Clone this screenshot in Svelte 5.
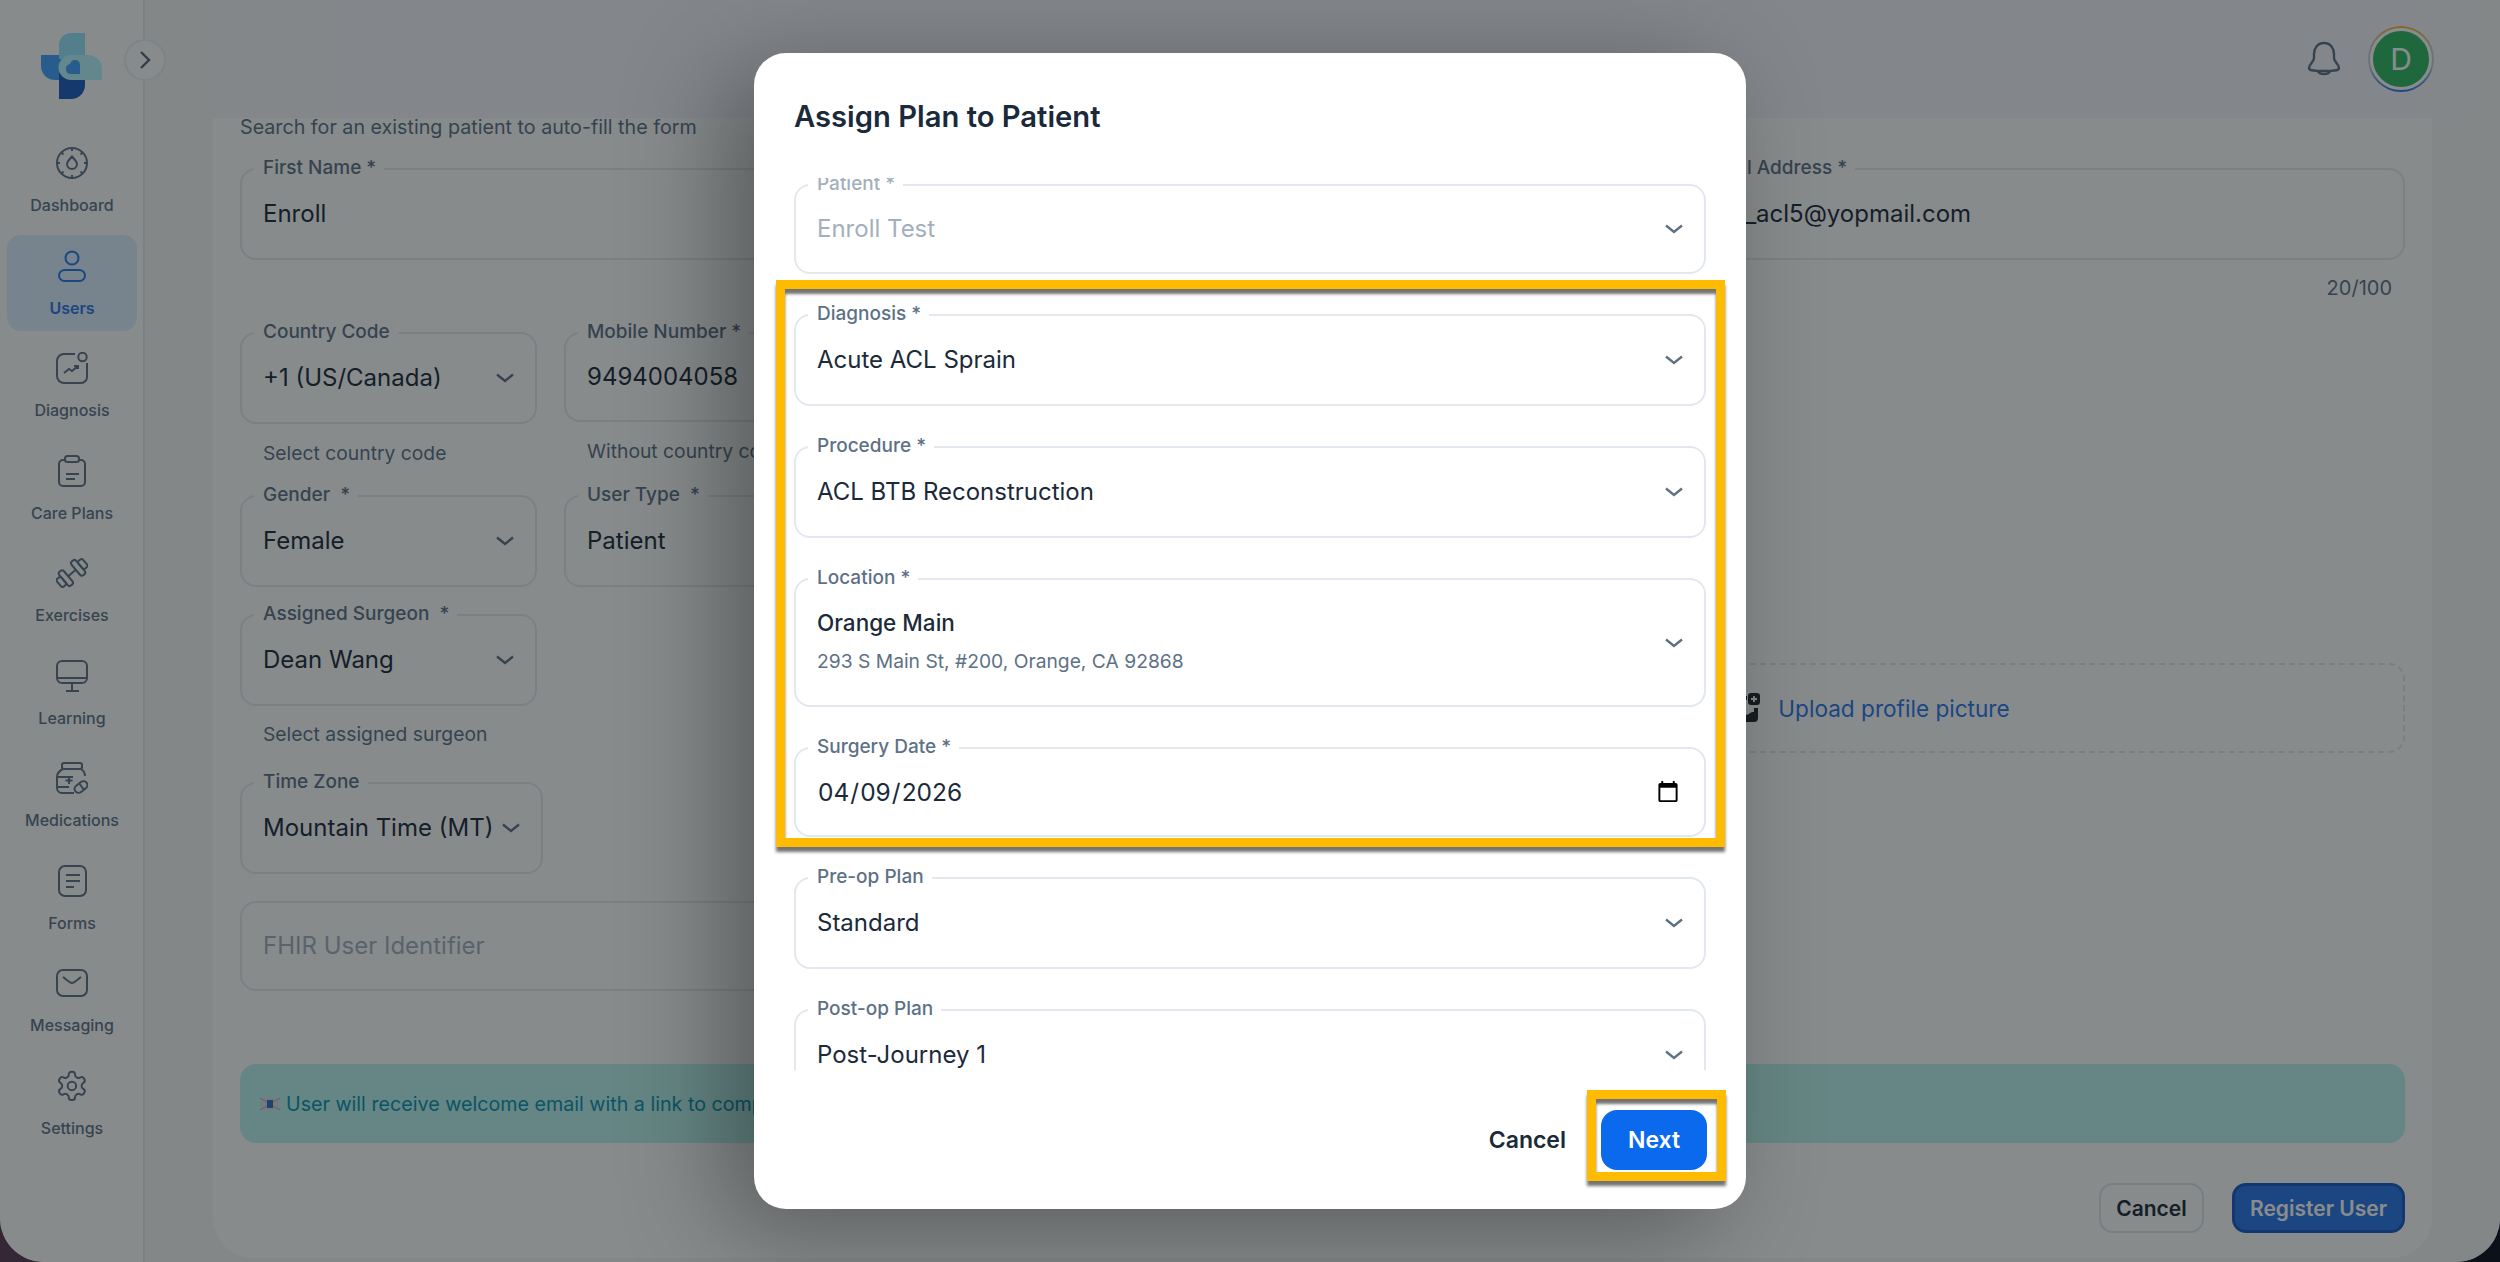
<script lang="ts">
  const nav = [
    { name: "Dashboard", icon: `<circle cx="16" cy="16" r="15"/><path d="M16 9.500c2.500 3 5 5 5 7.500a5 5 0 0 1-10 0c0-2.500 2.500-4.500 5-7.500z"/><path d="M16 1v3M16 28v3M1 16h3M28 16h3M5.500 5.500l2 2M24.500 7.500l2-2M5.500 26.500l2-2M24.500 24.500l2 2"/>` },
    { name: "Users", active: true, icon: `<circle cx="16" cy="8" r="6.500"/><rect x="3" y="20" width="26" height="11" rx="5.500"/>` },
    { name: "Diagnosis", icon: `<path d="M19 2H8a7 7 0 0 0-7 7v15a7 7 0 0 0 7 7h17a6 6 0 0 0 6-6V11"/><circle cx="26.500" cy="5" r="4.200"/><path d="M8 21l5-4 3 2 6-5M18 14h4v3"/>` },
    { name: "Care Plans", icon: `<path d="M9 5H7a4 4 0 0 0-4 4v18a4 4 0 0 0 4 4h18a4 4 0 0 0 4-4V9a4 4 0 0 0-4-4h-2"/><rect x="9" y="1" width="14" height="6" rx="2.500"/><path d="M10 19h13M10 24h9"/>` },
    { name: "Exercises", icon: `<g transform="rotate(-40 16 16)"><rect x="-1" y="11" width="6" height="10" rx="2"/><rect x="5" y="7" width="6" height="18" rx="2.500"/><rect x="21" y="7" width="6" height="18" rx="2.500"/><rect x="27" y="11" width="6" height="10" rx="2"/><path d="M11 16h10"/></g>` },
    { name: "Learning", icon: `<rect x="1" y="1" width="30" height="22" rx="5"/><path d="M1 18h30M16 23v7M10 31h13"/>` },
    { name: "Medications", icon: `<rect x="6" y="1" width="20" height="6" rx="2"/><path d="M25 7c3 2 4 4 4 7M7 7c-4 2-6 4-6 8v11a5 5 0 0 0 5 5h12"/><path d="M1 15h16M1 25h12M13 15v7M9.500 18.500h7"/><rect x="18" y="21" width="14" height="8" rx="4" transform="rotate(-38 25 25)"/><path d="M23 21l5 7"/>` },
    { name: "Forms", icon: `<rect x="3" y="1" width="27" height="30" rx="6"/><path d="M10 10h14M10 16h14M10 22h8"/>` },
    { name: "Messaging", icon: `<rect x="1" y="3" width="30" height="26" rx="6"/><path d="M7 10c5 4 7 6 9 6s4-2 9-6"/>` },
    { name: "Settings", icon: `<g transform="scale(1.42) translate(-.8 -.8)" stroke-width="1.400"><path d="M12.220 2h-.44a2 2 0 0 0-2 2v.18a2 2 0 0 1-1 1.730l-.43.25a2 2 0 0 1-2 0l-.15-.08a2 2 0 0 0-2.730.73l-.22.38a2 2 0 0 0 .73 2.730l.15.1a2 2 0 0 1 1 1.720v.51a2 2 0 0 1-1 1.740l-.15.09a2 2 0 0 0-.73 2.730l.22.38a2 2 0 0 0 2.730.73l.15-.08a2 2 0 0 1 2 0l.43.25a2 2 0 0 1 1 1.730V20a2 2 0 0 0 2 2h.44a2 2 0 0 0 2-2v-.18a2 2 0 0 1 1-1.730l.43-.25a2 2 0 0 1 2 0l.15.08a2 2 0 0 0 2.730-.73l.22-.39a2 2 0 0 0-.73-2.730l-.15-.08a2 2 0 0 1-1-1.740v-.5a2 2 0 0 1 1-1.740l.15-.09a2 2 0 0 0 .73-2.730l-.22-.38a2 2 0 0 0-2.730-.73l-.15.08a2 2 0 0 1-2 0l-.43-.25a2 2 0 0 1-1-1.730V4a2 2 0 0 0-2-2z"/><circle cx="12" cy="12" r="3"/></g>` },
  ];
</script>

{#snippet chevron()}
  <svg class="chevron" width="18" height="10" viewBox="0 0 18 10" fill="none" aria-hidden="true">
    <path d="M1 1.500l8 6.500 8-6.500" stroke="currentColor" stroke-width="2.400" />
  </svg>
{/snippet}

{#snippet field(label: string, value: string, select = false, cls = "")}
  <div class="field {cls}">
    <span class="label">{label}</span>
    <span class="value">{value}</span>
    {#if select}{@render chevron()}{/if}
  </div>
{/snippet}

<div class="window">
  <div class="app">
    <aside class="sidebar">
      <div class="brand">
        <svg width="62" height="66" viewBox="0 0 62 66" aria-hidden="true">
          <path d="M0 22h26v25H14A14 14 0 0 1 0 33z" fill="#42a2ff" />
          <path d="M18 40h26v12a14 14 0 0 1-14 14H18z" fill="#1c5cc0" />
          <path d="M18 12A12 12 0 0 1 30 0h14v26H18z" fill="#95e6ff" />
          <path d="M30 22h17a14 14 0 0 1 14 14v11H30a12.500 12.500 0 0 1 0-25z" fill="#b7f6ff" />
          <path d="M39 41H30a5 5 0 0 1-1-9.900c.5-2.500 2.500-4.100 5-4.100 3 0 5 2 5 5z" fill="#42a2ff" />
        </svg>
      </div>
      <button class="toggle" aria-label="Expand sidebar">
        <svg width="14" height="22" viewBox="0 0 14 22" fill="none"><path d="M3 3l8 8-8 8" stroke="currentColor" stroke-width="2.400" /></svg>
      </button>
      <nav class="nav">
        {#each nav as item}
          <div class="nav-item" class:active={item.active}>
            <svg width="32" height="32" viewBox="0 0 32 32" fill="none" stroke="currentColor" stroke-width="2" aria-hidden="true">{@html item.icon}</svg>
            <span>{item.name}</span>
          </div>
        {/each}
      </nav>
    </aside>

    <main class="main">
      <header class="topbar">
        <svg class="bell" width="34" height="36" viewBox="0 0 34 36" fill="none" stroke="currentColor" stroke-width="2.400" aria-hidden="true">
          <path d="M17 2C10 2 7 8 7 13v4c0 4-5 6-5 10 0 2 2 3 15 3s15-1 15-3c0-4-5-6-5-10v-4c0-5-3-11-10-11z" />
          <path d="M11 30c1 4 11 4 12 0" />
        </svg>
        <div class="avatar-ring"><div class="avatar">D</div></div>
      </header>

      <section class="card">
        <p class="search-hint">Search for an existing patient to auto-fill the form</p>

        <div class="name-row">
          {@render field("First Name *", "Enroll")}
          {@render field("Last Name *", "Test")}
          {@render field("Email Address *", "test_acl5@yopmail.com")}
        </div>
        <div class="counter">20/100</div>

        <div class="form-body">
          <div class="left">
            <div class="pair">
              <div class="col">
                {@render field("Country Code", "+1 (US/Canada)", true)}
                <p class="help">Select country code</p>
              </div>
              <div class="col">
                {@render field("Mobile Number *", "9494004058", false, "short")}
                <p class="help">Without country code</p>
              </div>
            </div>
            <div class="pair gender-row">
              <div class="col">{@render field("Gender  *", "Female", true)}</div>
              <div class="col">{@render field("User Type  *", "Patient", true)}</div>
            </div>
            <div class="pair surgeon-row">
              <div class="col">
                {@render field("Assigned Surgeon  *", "Dean Wang", true)}
                <p class="help tight">Select assigned surgeon</p>
              </div>
            </div>
            <div class="timezone">{@render field("Time Zone", "Mountain Time (MT)", true)}</div>
            <div class="fhir field short"><span class="value placeholder">FHIR User Identifier</span></div>
          </div>
          <div class="right">
            <div class="upload">
              <svg width="30" height="30" viewBox="0 0 30 30" aria-hidden="true">
                <path d="M2 3h15v4H6v16l6-5 5 4 5-3h2v-4h4v10a4 4 0 0 1-4 4H6a4 4 0 0 1-4-4z" fill="#20262c" />
                <rect x="18" y="0" width="12" height="12" rx="3" fill="#20262c" />
                <path d="M24 3v6M21 6h6" stroke="#fff" stroke-width="1.800" />
              </svg>
              <span>Upload profile picture</span>
            </div>
          </div>
        </div>

        <div class="banner">
          <svg width="20" height="12" viewBox="0 0 20 12" aria-hidden="true">
            <rect width="20" height="12" fill="#d8dce2" />
            <path d="M0 0l10 6 10-6M0 12l10-6 10 6" stroke="#a8aeb6" fill="none" />
            <rect x="7" y="2" width="6" height="8" fill="#2f6fd0" />
          </svg>
          <span>User will receive welcome email with a link to complete their registration and set up a password</span>
        </div>

        <div class="card-actions">
          <button class="btn-ghost">Cancel</button>
          <button class="btn-primary">Register User</button>
        </div>
      </section>
    </main>
  </div>

  <div class="overlay">
    <div class="modal" role="dialog" aria-label="Assign Plan to Patient">
      <h2 class="title">Assign Plan to Patient</h2>

      <div class="scroller">
        {@render field("Patient *", "Enroll Test", true, "disabled short")}
        {@render field("Diagnosis *", "Acute ACL Sprain", true)}
        {@render field("Procedure *", "ACL BTB Reconstruction", true)}
        <div class="field location">
          <span class="label">Location *</span>
          <div class="stack">
            <span class="value name">Orange Main</span>
            <span class="address">293 S Main St, #200, Orange, CA 92868</span>
          </div>
          {@render chevron()}
        </div>
        <div class="field short">
          <span class="label">Surgery Date *</span>
          <input class="date" type="date" value="2026-04-09" />
        </div>
        {@render field("Pre-op Plan", "Standard", true)}
        {@render field("Post-op Plan", "Post-Journey 1", true)}
      </div>

      <footer class="modal-actions">
        <button class="btn-text">Cancel</button>
        <button class="btn-next">Next</button>
      </footer>

      <!-- tutorial highlights -->
      <div class="mark mark-fields"></div>
      <div class="mark mark-next"></div>
    </div>
  </div>
</div>

<style>
  :global(body) {
    margin: 0;
    font-family: Inter, "Noto Sans", sans-serif;
  }

  .window {
    position: relative;
    width: 2500px;
    height: 1262px;
    overflow: hidden;
    background: linear-gradient(90deg, #5a3a55, #0a0e1c);
  }

  .app {
    display: flex;
    height: 100%;
    background: #fff;
    border-radius: 0 0 44px 44px;
    overflow: hidden;
  }

  .sidebar {
    position: relative;
    flex: 0 0 145px;
    box-sizing: border-box;
    border-right: 2px solid #e2e8f0;
    background: #fbfdfe;
  }

  .brand {
    height: 132px;
    box-sizing: border-box;
    padding: 33px 0 0 41px;
  }

  .toggle {
    position: absolute;
    top: 39px;
    left: 124px;
    width: 42px;
    height: 42px;
    padding: 0;
    display: flex;
    align-items: center;
    justify-content: center;
    border: 2px solid #eaeef3;
    border-radius: 50%;
    background: #fbfdfe;
    color: #52657a;
  }

  .nav {
    display: flex;
    flex-direction: column;
    gap: 6.500px;
    padding: 0 6px 0 7px;
  }

  .nav-item {
    height: 96px;
    box-sizing: border-box;
    padding-top: 15px;
    display: flex;
    flex-direction: column;
    align-items: center;
    border-radius: 14px;
    color: #5e7288;
    font-size: 16px;
    font-weight: 500;
    line-height: 20px;
  }

  .nav-item span {
    margin-top: 16px;
  }

  .nav-item.active {
    background: #dceeff;
    color: #2a76e8;
    font-weight: 600;
  }

  .main {
    flex: 1;
    min-width: 0;
    display: flex;
    flex-direction: column;
    background: #f3f5f6;
  }

  .topbar {
    flex: 0 0 119px;
    display: flex;
    align-items: center;
    justify-content: flex-end;
    gap: 27px;
    padding: 0 66px 0 0;
    margin-top: -1px;
    background: linear-gradient(90deg, #f3f5f6 0, #f3f5f6 2%, #f3f5fb 9%, #f3f5fb 96%, #f3f5f6 99%);
    color: #5d7186;
  }

  .avatar-ring {
    width: 66px;
    height: 66px;
    box-sizing: border-box;
    padding: 2px;
    border-radius: 50%;
    background: linear-gradient(#f5b53f, #c8ccd0 35%, #c8ccd0 60%, #2a76e8);
  }

  .avatar {
    width: 100%;
    height: 100%;
    box-sizing: border-box;
    display: flex;
    align-items: center;
    justify-content: center;
    border: 3px solid #fff;
    border-radius: 50%;
    background: #2fb862;
    color: #fff;
    font-size: 30px;
  }

  .card {
    flex: 1;
    margin: 0 68px 4px;
    padding: 0 27px;
    background: #fcfdfe;
    border-radius: 0 0 40px 40px;
    color: #1b2a3a;
  }

  .search-hint {
    margin: 0;
    font-size: 19.700px;
    line-height: 18px;
    color: #5d7186;
  }

  .name-row {
    display: grid;
    grid-template-columns: 1fr 1fr 725px;
    gap: 27px;
    margin-top: 32px;
  }

  .counter {
    margin-top: 18px;
    padding-right: 13px;
    text-align: right;
    font-size: 20px;
    line-height: 20px;
    color: #5d7186;
  }

  .form-body {
    display: flex;
    gap: 25px;
    margin-top: 34px;
  }

  .left {
    flex: 0 0 1070px;
  }

  .right {
    flex: 1;
  }

  .pair {
    display: flex;
    gap: 27px;
  }

  .col {
    flex: 0 0 297px;
  }

  .help {
    margin: 19px 0 0;
    padding-left: 23px;
    font-size: 19.300px;
    line-height: 20px;
    white-space: nowrap;
    color: #5d7186;
  }

  .help.tight {
    margin-top: 18px;
  }

  .gender-row {
    margin-top: 32px;
  }

  .surgeon-row {
    margin-top: 27px;
  }

  .timezone {
    width: 303px;
    margin-top: 38px;
  }

  .fhir {
    margin-top: 27px;
  }

  .upload {
    display: flex;
    align-items: center;
    justify-content: center;
    gap: 18px;
    height: 90px;
    margin-top: 331px;
    box-sizing: border-box;
    border: 2px dashed #dde3ea;
    border-radius: 16px;
    color: #2a76e8;
    font-size: 22.600px;
  }

  .banner {
    display: flex;
    align-items: center;
    gap: 6px;
    height: 79px;
    margin-top: 73px;
    padding-left: 20px;
    border-radius: 16px;
    background: #b8f3ee;
    color: #0891b2;
    font-size: 19.700px;
    padding-top: 1px;
    box-sizing: border-box;
  }

  .card-actions {
    display: flex;
    justify-content: flex-end;
    gap: 28px;
    margin-top: 40px;
  }

  .card-actions button {
    height: 50px;
    padding: 0;
    border-radius: 14px;
    white-space: nowrap;
    font: 600 21px Inter, sans-serif;
  }

  .btn-ghost {
    width: 105px;
    border: 2px solid #dde3ea;
    background: transparent;
    color: #1b2a3a;
  }

  .btn-primary {
    width: 173px;
    border: 3px solid #1858c8;
    background: #2a76e8;
    color: #fff;
  }

  /* outlined field, label sits on the top border */
  .field {
    position: relative;
    height: 92px;
    box-sizing: border-box;
    display: flex;
    align-items: center;
    justify-content: space-between;
    padding: 0 21px;
    border: 2px solid #e3e8ee;
    border-radius: 16px;
    background: inherit;
  }

  .field.short {
    height: 90px;
  }

  .field.location {
    height: 129px;
  }

  .label {
    position: absolute;
    top: -12px;
    left: 12px;
    padding: 0 8px 0 9px;
    background: #fff;
    font-size: 19px;
    font-weight: 500;
    line-height: 20px;
    white-space: pre;
    color: #5d7186;
  }

  .card .label {
    background: #fcfdfe;
  }

  .value {
    font-size: 24px;
    line-height: 30px;
    white-space: nowrap;
    color: #1b2a3a;
  }

  .placeholder {
    color: #a3afbd;
  }

  .chevron {
    flex: none;
    color: #5d7186;
  }

  /* modal */
  .overlay {
    position: absolute;
    inset: 0;
    display: flex;
    align-items: center;
    justify-content: center;
    background: rgba(15, 20, 22, 0.49);
  }

  .modal {
    position: relative;
    width: 992px;
    height: 1156px;
    display: flex;
    flex-direction: column;
    background: #fff;
    border-radius: 32px;
    box-shadow: -30px 20px 100px rgba(0, 0, 0, 0.34);
  }

  .title {
    flex: 0 0 125px;
    box-sizing: border-box;
    margin: 0;
    padding: 46px 40px 0;
    font-size: 29.200px;
    font-weight: 600;
    line-height: 36px;
    color: #1b2a3a;
  }

  .scroller {
    flex: 1;
    min-height: 0;
    overflow: hidden;
    display: flex;
    flex-direction: column;
    gap: 40px;
    padding: 6px 40px 0;
  }

  .scroller .field {
    flex: none;
  }

  .disabled .value,
  .disabled .label {
    color: #a3afbd;
  }

  .stack {
    display: flex;
    flex-direction: column;
    gap: 13px;
    margin-top: -3px;
  }

  .name {
    font-size: 22.500px;
    line-height: 26px;
    font-weight: 500;
  }

  .address {
    font-size: 19.250px;
    line-height: 24px;
    color: #5d7186;
  }

  .date {
    width: 100%;
    padding: 0 1px 0 0;
    border: none;
    outline: none;
    background: transparent;
    font: 24.500px Inter, sans-serif;
    color: #1b2a3a;
  }

  .modal-actions {
    flex: 0 0 139px;
    box-sizing: border-box;
    display: flex;
    align-items: center;
    justify-content: flex-end;
    padding: 0 39px;
    gap: 35px;
  }

  .modal-actions button {
    border: none;
    font: 600 23px Inter, sans-serif;
  }

  .btn-text {
    padding: 0;
    background: none;
    color: #1b2a3a;
  }

  .btn-next {
    width: 106px;
    height: 60px;
    border-radius: 16px;
    background: #0b69ee;
    color: #fff;
  }

  .mark {
    position: absolute;
    box-sizing: border-box;
    border: 9px solid #ffbb00;
    box-shadow: 0 5px 3px rgba(0, 0, 0, 0.55), inset 0 5px 3px rgba(0, 0, 0, 0.55);
    pointer-events: none;
  }

  .mark-fields {
    left: 22px;
    top: 227px;
    width: 949px;
    height: 567px;
  }

  .mark-next {
    left: 833px;
    top: 1037px;
    width: 139px;
    height: 91px;
  }
</style>
